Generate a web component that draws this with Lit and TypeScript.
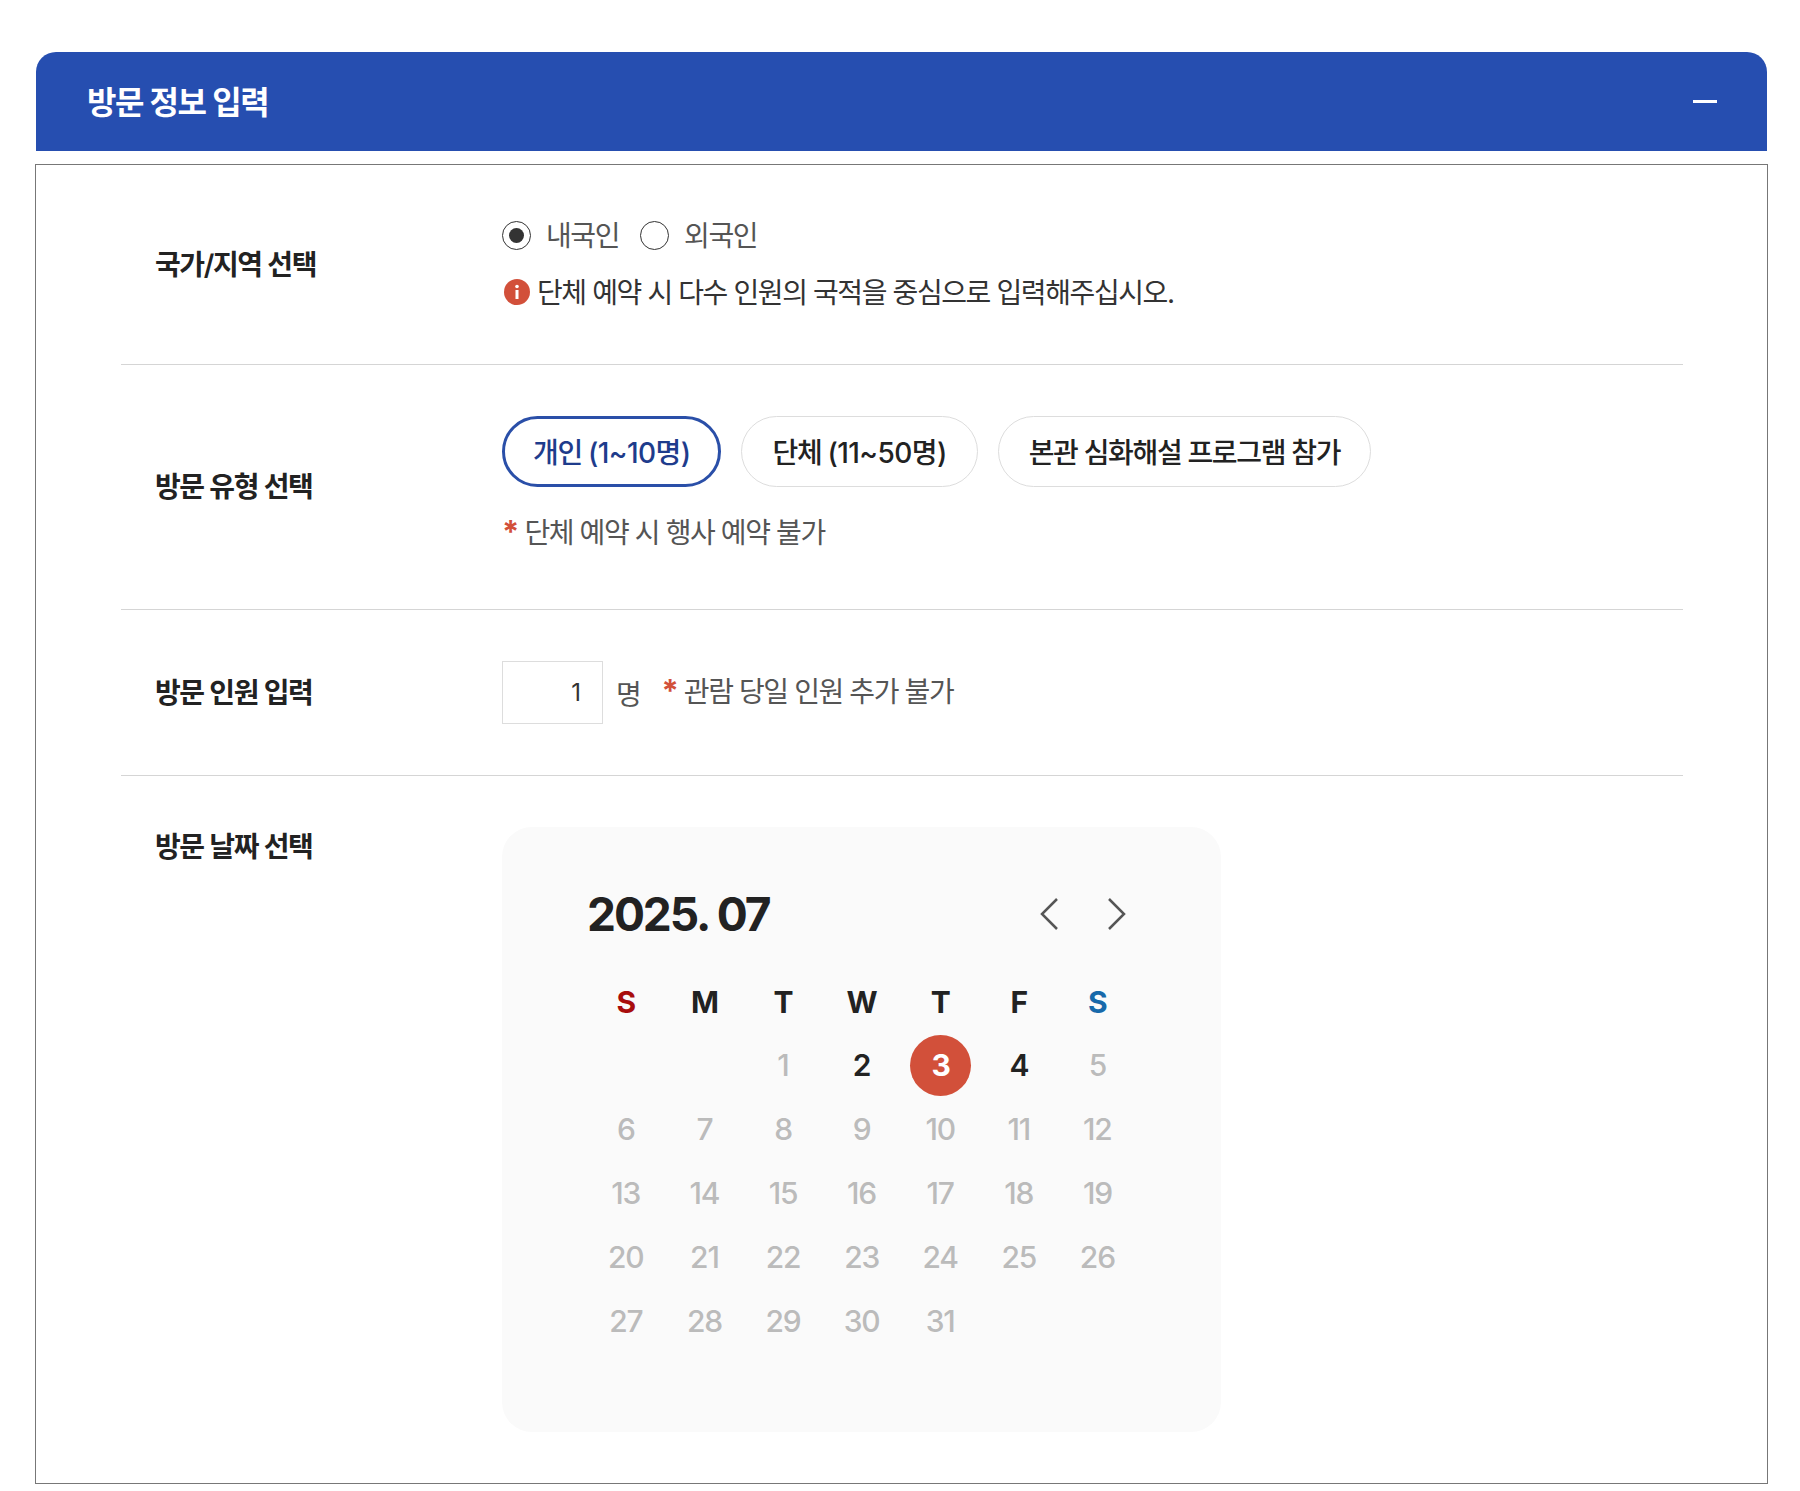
import { LitElement, html, css } from "lit";
import { customElement, state } from "lit/decorators.js";
import { classMap } from "lit/directives/class-map.js";

const WEEK = ["S", "M", "T", "W", "T", "F", "S"];
const TYPES = [
  { name: "개인", range: "(1~10명)" },
  { name: "단체", range: "(11~50명)" },
  { name: "본관 심화해설 프로그램 참가", range: "" },
];

@customElement("app-root")
export class AppRoot extends LitElement {
  static styles = css`
    :host {
      display: block;
      font-family: Inter, "Noto Sans CJK KR", sans-serif;
      color: #222;
    }
    * {
      box-sizing: border-box;
    }
    .page {
      padding: 52px 32px 7px 35px;
    }
    .head {
      display: flex;
      align-items: center;
      justify-content: space-between;
      height: 99px;
      margin: 0 1px;
      padding: 0 50px 0 51px;
      background: #264eb0;
      border-radius: 20px 20px 0 0;
      color: #fff;
    }
    .head h2 {
      margin: 0 0 4px;
      font-size: 32px;
      font-weight: 600;
      letter-spacing: -0.045em;
    }
    .minus {
      width: 24px;
      height: 3px;
      background: #fff;
    }
    .panel {
      margin-top: 13px;
      padding: 0 84px 51px 85px;
      border: 1px solid #777;
    }
    .row {
      display: flex;
      align-items: center;
      padding: 51px 0;
      border-bottom: 1px solid #d5d5d5;
    }
    .row.last {
      align-items: flex-start;
      padding-bottom: 0;
      border-bottom: 0;
    }
    .label {
      flex: none;
      width: 381px;
      padding: 0 0 4px 34px;
      font-size: 28px;
      font-weight: 600;
      letter-spacing: -0.05em;
      color: #222;
    }
    .last .label {
      padding-bottom: 0;
      line-height: 40px;
    }
    .radios {
      display: flex;
      align-items: center;
      gap: 21px;
      height: 40px;
      margin: -1px 0 17px;
    }
    .radio {
      display: flex;
      align-items: center;
      gap: 15px;
      font-size: 28px;
      letter-spacing: -0.05em;
      color: #555;
    }
    .radio b {
      padding-bottom: 2px;
      font-weight: 400;
    }
    .dot {
      display: flex;
      align-items: center;
      justify-content: center;
      width: 29px;
      height: 29px;
      border: 1.5px solid #333;
      border-radius: 50%;
    }
    .dot.on::after {
      content: "";
      width: 15px;
      height: 15px;
      border-radius: 50%;
      background: #333;
    }
    .info {
      display: flex;
      align-items: center;
      gap: 7px;
      height: 39px;
      margin-bottom: 2px;
      padding-left: 2px;
      font-size: 28px;
      letter-spacing: -0.05em;
      color: #333;
    }
    .info svg {
      flex: none;
    }
    .info span {
      padding-bottom: 2px;
    }
    .pills {
      display: flex;
      gap: 20px;
    }
    .pill {
      height: 71px;
      padding: 0 30px 2px;
      border: 1px solid #ddd;
      border-radius: 36px;
      background: #fff;
      font: inherit;
      font-size: 28px;
      font-weight: 500;
      letter-spacing: -0.048em;
      color: #222;
    }
    .pill span {
      letter-spacing: -0.02em;
    }
    .pill.on {
      padding: 0 28px 2px;
      border: 3px solid #2a4fa8;
      color: #1e3c8c;
    }
    .note {
      margin-top: 22px;
      font-size: 28px;
      line-height: 49px;
      letter-spacing: -0.05em;
      color: #555;
    }
    .star {
      font-size: 31px;
      line-height: 0;
      color: #d2503a;
      font-weight: 700;
    }
    .count {
      display: flex;
      align-items: center;
      font-size: 28px;
      letter-spacing: -0.05em;
      color: #555;
    }
    .count input {
      width: 101px;
      height: 63px;
      margin-right: 13px;
      padding: 0 21px 0 0;
      border: 1px solid #ddd;
      border-radius: 0;
      font: inherit;
      font-size: 24px;
      color: #333;
      text-align: right;
    }
    .count .note {
      margin: 0 0 0 21px;
    }
    .cal {
      width: 719px;
      height: 605px;
      padding: 60px 83px 0 85px;
      border-radius: 30px;
      background: #fafafa;
    }
    .cal-head {
      display: flex;
      align-items: center;
      justify-content: space-between;
      height: 54px;
      margin-bottom: 29px;
      padding-right: 11px;
    }
    .cal-head strong {
      font-size: 46px;
      font-weight: 700;
      letter-spacing: -0.045em;
      color: #222;
    }
    .arrows {
      display: flex;
      gap: 48px;
    }
    .arrows svg {
      display: block;
    }
    .grid {
      display: grid;
      grid-template-columns: repeat(7, 78.6px);
      grid-auto-rows: 64px;
      align-items: center;
      justify-items: center;
    }
    .wd {
      font-size: 30px;
      font-weight: 700;
      color: #222;
    }
    .wd.sun {
      color: #a80d0d;
    }
    .wd.sat {
      color: #1769aa;
    }
    .day {
      display: flex;
      align-items: center;
      justify-content: center;
      width: 61px;
      height: 61px;
      margin-top: -2px;
      padding-right: 1px;
      border-radius: 50%;
      font-size: 30px;
      font-weight: 550;
      letter-spacing: -0.04em;
      color: #bbb;
    }
    .day.open {
      font-weight: 600;
      color: #222;
    }
    .day.picked {
      padding-right: 0;
      font-weight: 700;
      background: #d2503a;
      color: #fff;
    }
  `;

  @state() private typeIdx = 0;

  private renderDay(d: number) {
    const classes = { day: true, open: d === 2 || d === 4, picked: d === 3 };
    return html`<div class=${classMap(classes)}>${d}</div>`;
  }

  render() {
    const days = Array.from({ length: 31 }, (_, i) => i + 1);
    return html`
      <div class="page">
        <div class="head">
          <h2>방문 정보 입력</h2>
          <div class="minus"></div>
        </div>
        <div class="panel">
          <div class="row">
            <div class="label">국가/지역 선택</div>
            <div>
              <div class="radios">
                <div class="radio"><span class="dot on"></span><b>내국인</b></div>
                <div class="radio"><span class="dot"></span><b>외국인</b></div>
              </div>
              <div class="info">
                <svg width="26" height="26" viewBox="0 0 26 26">
                  <circle cx="13" cy="13" r="13" fill="#d2503a"></circle>
                  <circle cx="13" cy="7.5" r="1.8" fill="#fff"></circle>
                  <rect x="11.5" y="11" width="3" height="9" fill="#fff"></rect>
                </svg>
                <span>단체 예약 시 다수 인원의 국적을 중심으로 입력해주십시오.</span>
              </div>
            </div>
          </div>
          <div class="row">
            <div class="label">방문 유형 선택</div>
            <div>
              <div class="pills">
                ${TYPES.map(
                  (t, i) => html`<button
                    class=${classMap({ pill: true, on: i === this.typeIdx })}
                    @click=${() => (this.typeIdx = i)}
                  >
                    ${t.name} <span>${t.range}</span>
                  </button>`
                )}
              </div>
              <div class="note"><span class="star">*</span> 단체 예약 시 행사 예약 불가</div>
            </div>
          </div>
          <div class="row">
            <div class="label">방문 인원 입력</div>
            <div class="count">
              <input type="text" value="1" />
              명
              <div class="note"><span class="star">*</span> 관람 당일 인원 추가 불가</div>
            </div>
          </div>
          <div class="row last">
            <div class="label">방문 날짜 선택</div>
            <div class="cal">
              <div class="cal-head">
                <strong>2025. 07</strong>
                <div class="arrows">
                  <svg width="20" height="34" viewBox="0 0 20 34" fill="none" stroke="#555" stroke-width="2.5">
                    <path d="M18 2L3 17l15 15"></path>
                  </svg>
                  <svg width="20" height="34" viewBox="0 0 20 34" fill="none" stroke="#555" stroke-width="2.5">
                    <path d="M2 2l15 15L2 32"></path>
                  </svg>
                </div>
              </div>
              <div class="grid">
                ${WEEK.map(
                  (w, i) => html`<div class=${classMap({ wd: true, sun: i === 0, sat: i === 6 })}>${w}</div>`
                )}
                <div></div>
                <div></div>
                ${days.map((d) => this.renderDay(d))}
              </div>
            </div>
          </div>
        </div>
      </div>
    `;
  }
}
